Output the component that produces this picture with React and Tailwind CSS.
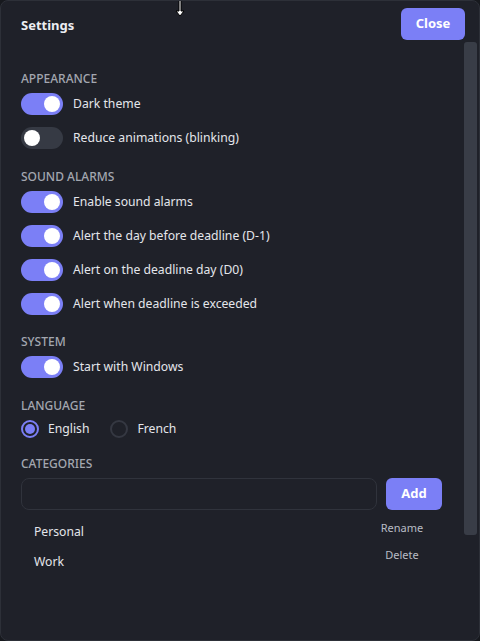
import { useState } from "react";

function Toggle({ on }) {
  return (
    <span
      className={`relative inline-flex h-[22px] w-[42px] shrink-0 items-center rounded-full ${
        on ? "bg-[#7b7ff6]" : "bg-[#363a44]"
      }`}
    >
      <span
        className={`absolute top-[3px] h-4 w-4 rounded-full bg-white ${on ? "left-[23px]" : "left-[3px]"}`}
      />
    </span>
  );
}

function ToggleRow({ on, label }) {
  return (
    <div className="flex items-center gap-[10px]">
      <Toggle on={on} />
      <span className="text-[12.2px] leading-[22px] text-[#e4e6eb]">{label}</span>
    </div>
  );
}

function Radio({ on, label }) {
  return (
    <div className="flex items-center gap-[9px]">
      <span
        className={`flex h-[18px] w-[18px] items-center justify-center rounded-full border-2 ${
          on ? "border-[#7b7ff6]" : "border-[#353842]"
        }`}
      >
        {on && <span className="h-[10px] w-[10px] rounded-full bg-[#7b7ff6]" />}
      </span>
      <span className="text-[12.2px] leading-[18px] text-[#e4e6eb]">{label}</span>
    </div>
  );
}

function SectionTitle({ children }) {
  return <h3 className="text-[12px] leading-[18px] font-medium uppercase text-[#a3a7b0]">{children}</h3>;
}

export default function App() {
  const [name, setName] = useState("");

  return (
    <div
      className="h-[641px] w-[480px] bg-[#17191e]"
      style={{ fontFamily: '"Noto Sans", "Open Sans", sans-serif' }}
    >
      <div className="relative flex h-full flex-col overflow-hidden rounded-lg border border-[#2d3038] bg-[#1f2129]">
        {/* cursor */}
        <svg className="absolute left-[173px] top-[-1px]" width="12" height="18" viewBox="0 0 12 18">
          <path d="M5 0h2v11h3l-4 5-4-5h3z" fill="#fff" stroke="#000" strokeWidth="1" />
        </svg>

        <header className="flex items-center justify-between pl-5 pr-[14px] pt-[7px]">
          <h2 className="pt-[3px] text-[13px] font-bold text-[#eceef2]">Settings</h2>
          <button className="h-8 w-16 rounded-md bg-[#7b7ff6] text-[13px] font-bold text-white">Close</button>
        </header>

        <div className="flex flex-1 min-h-0">
          <div className="flex-1 pl-5 pt-[30px]">
            <section className="flex flex-col gap-[5px]">
              <SectionTitle>Appearance</SectionTitle>
              <div className="flex flex-col gap-3">
                <ToggleRow on label="Dark theme" />
                <ToggleRow on={false} label="Reduce animations (blinking)" />
              </div>
            </section>

            <section className="mt-[19px] flex flex-col gap-[5px]">
              <SectionTitle>Sound alarms</SectionTitle>
              <div className="flex flex-col gap-3">
                <ToggleRow on label="Enable sound alarms" />
                <ToggleRow on label="Alert the day before deadline (D-1)" />
                <ToggleRow on label="Alert on the deadline day (D0)" />
                <ToggleRow on label="Alert when deadline is exceeded" />
              </div>
            </section>

            <section className="mt-[18px] flex flex-col gap-[5px]">
              <SectionTitle>System</SectionTitle>
              <ToggleRow on label="Start with Windows" />
            </section>

            <section className="mt-[19px] flex flex-col gap-[5px]">
              <SectionTitle>Language</SectionTitle>
              <div className="flex items-center gap-[21px]">
                <Radio on label="English" />
                <Radio on={false} label="French" />
              </div>
            </section>

            <section className="mt-[17px] flex flex-col gap-[5px]">
              <SectionTitle>Categories</SectionTitle>
              <div className="flex items-center gap-[9px]">
                <input
                  value={name}
                  onChange={(e) => setName(e.target.value)}
                  className="h-8 w-[356px] rounded-lg border border-[#30333c] bg-[#1f2129] px-3 text-[13px] text-white outline-none"
                />
                <button className="h-8 w-14 rounded-md bg-[#7b7ff6] text-[13px] font-bold text-white">Add</button>
              </div>
              <div className="mt-[3px] flex">
                <div className="flex flex-1 flex-col gap-[11px] pl-[13px] pt-[4px]">
                  <span className="text-[12.2px] leading-[19px] text-[#e4e6eb]">Personal</span>
                  <span className="text-[12.2px] leading-[19px] text-[#e4e6eb]">Work</span>
                </div>
                <div className="mr-[34px] flex w-[56px] flex-col items-center gap-[11px] pt-[2px]">
                  <button className="text-[11px] leading-[16px] text-[#b8bcc5]">Rename</button>
                  <button className="text-[11px] leading-[16px] text-[#b8bcc5]">Delete</button>
                </div>
              </div>
            </section>
          </div>

          <div className="w-[13px] shrink-0 pt-[2px] mr-[2px]">
            <div className="h-[493px] rounded-[3px] bg-[#393d47]" />
          </div>
        </div>
      </div>
    </div>
  );
}
